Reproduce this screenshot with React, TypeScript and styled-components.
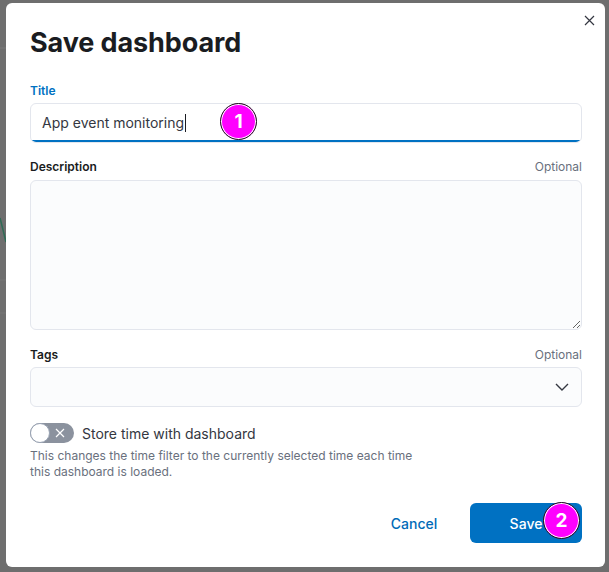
import React from "react";
import styled, { createGlobalStyle } from "styled-components";

const GlobalStyle = createGlobalStyle`
  html, body { margin: 0; padding: 0; }
  body {
    width: 609px;
    height: 572px;
    overflow: hidden;
    background: #6e6e6e;
    font-family: Inter, "Noto Sans", sans-serif;
    -webkit-font-smoothing: antialiased;
  }
  * { box-sizing: border-box; }
`;

const Backdrop = styled.div`
  position: relative;
  width: 609px;
  height: 572px;
  padding: 3px 4px 5px 6px;
  background: #6e6e6e;
`;

const BackChart = styled.svg`
  position: absolute;
  left: 0;
  top: 0;
  width: 609px;
  height: 572px;
`;

const Modal = styled.div`
  position: relative;
  width: 599px;
  height: 564px;
  background: #ffffff;
  border-radius: 6px;
  padding: 22px 23px 24px 24px;
  display: flex;
  flex-direction: column;
`;

const CloseButton = styled.button`
  position: absolute;
  top: 7px;
  right: 6px;
  width: 20px;
  height: 20px;
  border: none;
  background: transparent;
  padding: 0;
  display: flex;
  align-items: center;
  justify-content: center;
  color: #343741;
`;

const Title = styled.h1`
  margin: 0;
  font-size: 27px;
  line-height: 36px;
  font-weight: 700;
  color: #1a1c21;
  letter-spacing: -0.1px;
`;

const Form = styled.div`
  margin-top: 19px;
  display: flex;
  flex-direction: column;
`;

const Row = styled.div<{ $gap?: number }>`
  display: flex;
  flex-direction: column;
  margin-top: ${(p) => p.$gap ?? 0}px;
`;

const LabelRow = styled.div`
  display: flex;
  justify-content: space-between;
  align-items: center;
  height: 20px;
  margin-bottom: 3px;
`;

const Label = styled.label<{ $active?: boolean }>`
  font-size: 12px;
  font-weight: 600;
  color: ${(p) => (p.$active ? "#0071c2" : "#1a1c21")};
`;

const Optional = styled.span`
  font-size: 12px;
  color: #69707d;
`;

const InputBox = styled.div`
  position: relative;
  height: 40px;
  background: #ffffff;
  border: 1px solid #e3e6ed;
  border-radius: 6px;
  display: flex;
  align-items: center;
  padding: 0 11px 1px 11px;
  font-size: 14px;
  color: #343741;
  overflow: hidden;
  &::after {
    content: "";
    position: absolute;
    left: 0;
    right: 0;
    bottom: 0;
    height: 2px;
    background: #0071c2;
  }
`;

const Caret = styled.span`
  display: inline-block;
  width: 1px;
  height: 18px;
  background: #1a1c21;
  margin-left: 1px;
  vertical-align: middle;
`;

const TextArea = styled.textarea`
  height: 150px;
  width: 100%;
  background: #fbfcfd;
  border: 1px solid #e3e6ed;
  border-radius: 6px;
  resize: vertical;
  font-family: inherit;
  font-size: 14px;
  outline: none;
  margin: 1px 0 0 0;
  display: block;
`;

const Select = styled.div`
  height: 40px;
  background: #fbfcfd;
  border: 1px solid #e3e6ed;
  border-radius: 6px;
  display: flex;
  align-items: center;
  justify-content: flex-end;
  padding-right: 12px;
  color: #343741;
`;

const SwitchRow = styled.div`
  display: flex;
  align-items: center;
  gap: 8px;
  margin-top: 16px;
`;

const Track = styled.div`
  position: relative;
  width: 44px;
  height: 20px;
  border-radius: 10px;
  background: #8b929e;
  display: flex;
  align-items: center;
  justify-content: flex-end;
  padding-right: 9px;
  color: #ffffff;
`;

const Knob = styled.div`
  position: absolute;
  left: 0;
  top: 0;
  width: 20px;
  height: 20px;
  border-radius: 50%;
  background: #ffffff;
  border: 1px solid #98a2b3;
`;

const SwitchLabel = styled.span`
  font-size: 14px;
  color: #343741;
`;

const HelpText = styled.p`
  margin: 5px 0 0 0;
  max-width: 390px;
  font-size: 12px;
  line-height: 16px;
  color: #69707d;
`;

const Footer = styled.div`
  margin-top: auto;
  display: flex;
  justify-content: flex-end;
  align-items: center;
  gap: 16px;
`;

const EmptyButton = styled.button`
  height: 40px;
  min-width: 80px;
  padding: 0 12px;
  background: transparent;
  border: none;
  font-family: inherit;
  font-size: 14px;
  font-weight: 500;
  color: #006bb8;
`;

const PrimaryButton = styled.button`
  position: relative;
  height: 40px;
  width: 112px;
  border: none;
  border-radius: 6px;
  background: #0071c2;
  color: #ffffff;
  font-family: inherit;
  font-size: 14px;
  font-weight: 500;
`;

const Badge = styled.span<{ $x: number; $y: number }>`
  position: absolute;
  left: ${(p) => p.$x}px;
  top: ${(p) => p.$y}px;
  width: 37px;
  height: 37px;
  border-radius: 50%;
  background: #ff00ff;
  border: 1.5px solid #1a1a1a;
  box-shadow: inset 0 0 0 1px #ffffff;
  display: flex;
  align-items: center;
  justify-content: center;
  color: #ffffff;
  font-family: Inter, "Noto Sans", sans-serif;
  font-size: 19px;
  font-weight: 700;
  z-index: 2;
`;

const BadgeWrap = styled.div`
  position: relative;
`;

export default function App() {
  return (
    <>
      <GlobalStyle />
      <Backdrop>
        <BackChart viewBox="0 0 609 572">
          <line x1="0" y1="48" x2="6" y2="48" stroke="#7a7a7a" strokeWidth="1" />
          <line x1="0" y1="280" x2="6" y2="280" stroke="#767676" strokeWidth="1" />
          <line x1="0" y1="313" x2="6" y2="313" stroke="#767676" strokeWidth="1" />
          <polyline points="0,218 6,242" fill="none" stroke="#2f6b55" strokeWidth="1.5" />
        </BackChart>
        <Modal>
          <CloseButton aria-label="Close">
            <svg width="11" height="11" viewBox="0 0 11 11">
              <path d="M1 1 L10 10 M10 1 L1 10" stroke="#343741" strokeWidth="1.2" fill="none" />
            </svg>
          </CloseButton>
          <Title>Save dashboard</Title>
          <Form>
            <Row>
              <LabelRow>
                <Label $active>Title</Label>
              </LabelRow>
              <BadgeWrap>
                <InputBox>
                  App event monitoring<Caret />
                </InputBox>
                <Badge $x={190} $y={0}>1</Badge>
              </BadgeWrap>
            </Row>
            <Row $gap={13}>
              <LabelRow>
                <Label>Description</Label>
                <Optional>Optional</Optional>
              </LabelRow>
              <TextArea />
            </Row>
            <Row $gap={14}>
              <LabelRow>
                <Label>Tags</Label>
                <Optional>Optional</Optional>
              </LabelRow>
              <Select>
                <svg width="14" height="8" viewBox="0 0 14 8">
                  <path d="M1 1 L7 7 L13 1" stroke="#343741" strokeWidth="1.4" fill="none" />
                </svg>
              </Select>
            </Row>
            <SwitchRow>
              <Track>
                <Knob />
                <svg width="10" height="10" viewBox="0 0 10 10">
                  <path d="M1 1 L9 9 M9 1 L1 9" stroke="#ffffff" strokeWidth="1.2" fill="none" />
                </svg>
              </Track>
              <SwitchLabel>Store time with dashboard</SwitchLabel>
            </SwitchRow>
            <HelpText>
              This changes the time filter to the currently selected time each time this dashboard is loaded.
            </HelpText>
          </Form>
          <Footer>
            <EmptyButton>Cancel</EmptyButton>
            <PrimaryButton>
              Save
              <Badge $x={73} $y={-1}>2</Badge>
            </PrimaryButton>
          </Footer>
        </Modal>
      </Backdrop>
    </>
  );
}
